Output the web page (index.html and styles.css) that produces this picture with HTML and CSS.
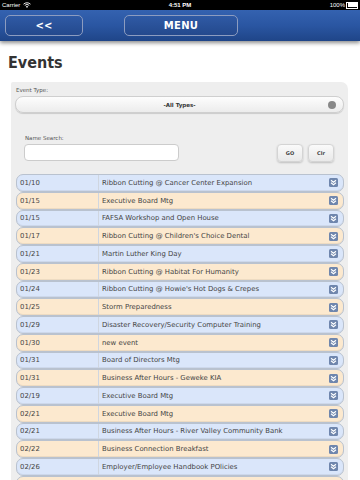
FILE: index.html
```html
<!DOCTYPE html>
<html lang="en">
<head>
    <meta charset="UTF-8">
    <meta name="viewport" content="width=device-width, initial-scale=1.0">
    <title>Events</title>
    <link rel="stylesheet" href="styles.css">
</head>
<body>
    <div class="status-bar">
        <div class="status-left">
            Carrier
            <svg class="wifi" width="8" height="6" viewBox="0 0 8 6">
                <path d="M0.5 2.2 A5 5 0 0 1 7.5 2.2" stroke="#fff" stroke-width="0.9" fill="none"/>
                <path d="M1.8 3.4 A3.2 3.2 0 0 1 6.2 3.4" stroke="#fff" stroke-width="0.9" fill="none"/>
                <path d="M4 6 L2.9 4.6 A1.6 1.6 0 0 1 5.1 4.6 Z" fill="#fff"/>
            </svg>
        </div>
        <div class="status-time">4:51 PM</div>
        <div class="status-right">
            100%
            <span class="battery"><span class="battery-fill"></span></span>
        </div>
    </div>

    <div class="nav-bar">
        <button class="nav-btn back-btn">&lt;&lt;</button>
        <button class="nav-btn menu-btn">MENU</button>
    </div>

    <h1 class="page-title">Events</h1>

    <div class="panel">
        <div class="field-label">Event Type:</div>
        <div class="select-bar">
            <span>-All Types-</span>
            <span class="select-dot"></span>
        </div>

        <div class="search-row">
            <div class="search-field">
                <div class="field-label">Name Search:</div>
                <input type="text" class="search-input">
            </div>
            <div class="search-buttons">
                <button class="small-btn">GO</button>
                <button class="small-btn">Clr</button>
            </div>
        </div>

        <div class="event-list" id="eventList"></div>
        <div class="event-row row-tan row-partial"></div>
    </div>

    <script>
        const events = [
            ['01/10', 'Ribbon Cutting @ Cancer Center Expansion'],
            ['01/15', 'Executive Board Mtg'],
            ['01/15', 'FAFSA Workshop and Open House'],
            ['01/17', "Ribbon Cutting @ Children's Choice Dental"],
            ['01/21', 'Martin Luther King Day'],
            ['01/23', 'Ribbon Cutting @ Habitat For Humanity'],
            ['01/24', "Ribbon Cutting @ Howie's Hot Dogs & Crepes"],
            ['01/25', 'Storm Preparedness'],
            ['01/29', 'Disaster Recovery/Security Computer Training'],
            ['01/30', 'new event'],
            ['01/31', 'Board of Directors Mtg'],
            ['01/31', 'Business After Hours - Geweke KIA'],
            ['02/19', 'Executive Board Mtg'],
            ['02/21', 'Executive Board Mtg'],
            ['02/21', 'Business After Hours - River Valley Community Bank'],
            ['02/22', 'Business Connection Breakfast'],
            ['02/26', 'Employer/Employee Handbook POlicies']
        ];

        const list = document.getElementById('eventList');
        const chevron = '<svg class="row-icon" width="9" height="9" viewBox="0 0 9 9">' +
            '<rect x="0" y="0" width="9" height="9" rx="1.5" fill="#6f86ad"/>' +
            '<path d="M2 2.2 L4.5 4.2 L7 2.2 M2 4.8 L4.5 6.8 L7 4.8" stroke="#fff" stroke-width="1.1" fill="none"/>' +
            '</svg>';

        events.forEach((ev, i) => {
            const row = document.createElement('div');
            row.className = 'event-row ' + (i % 2 === 0 ? 'row-blue' : 'row-tan');
            row.innerHTML = '<span class="event-date">' + ev[0] + '</span>' +
                '<span class="event-name"></span>' + chevron;
            row.querySelector('.event-name').textContent = ev[1];
            list.appendChild(row);
        });
    </script>
</body>
</html>
```

FILE: styles.css
```css
html, body {
    margin: 0;
    padding: 0;
    height: 480px;
    overflow: hidden;
}

body {
    background-color: #ffffff;
    font-family: "DejaVu Sans", Verdana, sans-serif;
    color: #333;
}

.status-bar {
    height: 10px;
    background-color: #000;
    color: #fff;
    font-family: "Liberation Sans", Arial, sans-serif;
    font-size: 6px;
    display: flex;
    align-items: center;
    justify-content: space-between;
    padding: 0 2px;
}

.status-left,
.status-right {
    width: 60px;
    display: flex;
    align-items: center;
    gap: 3px;
}

.status-right {
    justify-content: flex-end;
    gap: 1px;
}

.status-time {
    font-weight: bold;
}

.battery {
    width: 9px;
    height: 4px;
    border: 0.7px solid #fff;
    padding: 0.5px;
}

.battery-fill {
    display: block;
    width: 100%;
    height: 100%;
    background-color: #fff;
}

.nav-bar {
    height: 31px;
    background: linear-gradient(to bottom, #3462b0 0%, #2a56a2 50%, #1f4588 100%);
    display: flex;
    align-items: center;
    padding: 0 5px;
    gap: 41px;
    box-shadow: 0 2px 4px rgba(0, 0, 0, 0.45);
    position: relative;
    z-index: 1;
}

.nav-btn {
    height: 21px;
    border: 1px solid #8c9cc0;
    border-radius: 5px;
    background: linear-gradient(to bottom, #2f5aa5, #24498d);
    color: #fff;
    font-family: "DejaVu Sans", Verdana, sans-serif;
    font-weight: bold;
    font-size: 10px;
    padding: 0;
}

.back-btn {
    width: 78px;
}

.menu-btn {
    width: 114px;
    letter-spacing: 0.3px;
}

.page-title {
    margin: 13px 0 0 8px;
    font-family: "DejaVu Sans Condensed", "DejaVu Sans", sans-serif;
    font-weight: bold;
    font-size: 16px;
    color: #333;
    height: 18px;
    line-height: 18px;
}

.panel {
    margin: 10px 12px 0 11px;
    background-color: #eeeeee;
    border-top-right-radius: 7px;
    border-top-left-radius: 2px;
    padding: 4px 4px 0 4px;
    height: 420px;
}

.field-label {
    font-size: 5.5px;
    color: #555;
    height: 8px;
    line-height: 8px;
    margin-left: 1px;
}

.select-bar {
    margin-top: 2px;
    height: 17px;
    box-sizing: border-box;
    border: 1px solid #cfcfcf;
    border-radius: 8px;
    background: linear-gradient(to bottom, #fdfdfd, #ececec);
    box-shadow: 0 1px 1px rgba(0, 0, 0, 0.15);
    display: flex;
    align-items: center;
    justify-content: center;
    position: relative;
    font-size: 5.5px;
    font-weight: bold;
    color: #333;
}

.select-dot {
    position: absolute;
    right: 7px;
    top: 3.5px;
    width: 8px;
    height: 8px;
    border-radius: 50%;
    background-color: #888;
}

.search-row {
    display: flex;
    align-items: flex-end;
    justify-content: space-between;
    margin-top: 21px;
    padding: 0 10px 0 9px;
}

.search-field .field-label {
    margin-bottom: 2px;
}

.search-input {
    display: block;
    width: 155px;
    height: 17px;
    box-sizing: border-box;
    border: 1px solid #cccccc;
    border-radius: 4px;
    background-color: #fff;
    margin: 0;
}

.search-buttons {
    display: flex;
    gap: 5px;
    margin-bottom: -1px;
}

.small-btn {
    width: 26px;
    height: 18px;
    border: 1px solid #d4d4d4;
    border-radius: 4px;
    background: linear-gradient(to bottom, #fafafa, #e9e9e9);
    box-shadow: 0 1px 2px rgba(0, 0, 0, 0.2);
    font-family: "DejaVu Sans", Verdana, sans-serif;
    font-size: 5px;
    font-weight: bold;
    color: #444;
    padding: 0;
}

.event-list {
    margin-top: 13px;
}

.event-row {
    height: 17.75px;
    box-sizing: border-box;
    border: 1px solid #b9c2cf;
    border-radius: 7px;
    display: flex;
    align-items: center;
    font-size: 6.9px;
    color: #444;
    box-shadow: inset 0 -1px 0 rgba(0, 0, 0, 0.06);
    margin-left: 1px;
}

.row-blue {
    background-color: #dae6fa;
}

.row-tan {
    background-color: #fce9cf;
}

.event-date {
    width: 78px;
    padding-left: 3px;
    align-self: stretch;
    display: flex;
    align-items: center;
    border-right: 1px solid #cfd6e0;
    flex-shrink: 0;
}

.event-name {
    flex: 1;
    padding-left: 3px;
    white-space: nowrap;
    overflow: hidden;
}

.row-icon {
    margin-right: 5px;
    flex-shrink: 0;
}
```
